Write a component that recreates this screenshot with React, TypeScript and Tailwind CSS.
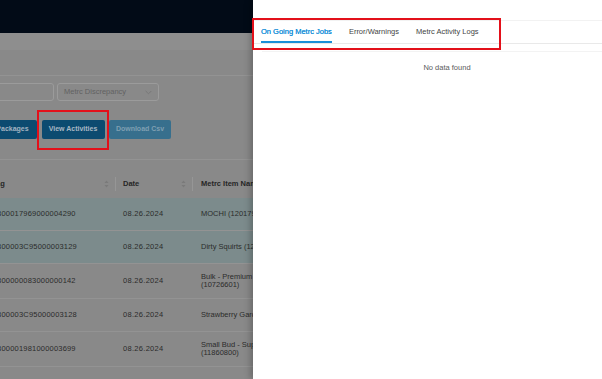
import React from "react";

function SortIcon() {
  return (
    <svg width="5" height="8" viewBox="0 0 5 8" className="shrink-0">
      <path d="M2.5 0.5 L4.5 3 L0.5 3 Z" fill="#7a7a7a" />
      <path d="M2.5 7.5 L4.5 5 L0.5 5 Z" fill="#7a7a7a" />
    </svg>
  );
}

type Row = { tag: string; date: string; name: string[]; hl: boolean };

const rows: Row[] = [
  { tag: "1A4010300017969000004290", date: "08.26.2024", name: ["MOCHI (12017905)"], hl: true },
  { tag: "1A4010300003C95000003129", date: "08.26.2024", name: ["Dirty Squirts (12017906)"], hl: true },
  { tag: "1A4010300000083000000142", date: "08.26.2024", name: ["Bulk - Premium Flower", "(10726601)"], hl: false },
  { tag: "1A4010300003C95000003128", date: "08.26.2024", name: ["Strawberry Gardens (12017907)"], hl: false },
  { tag: "1A4010300001981000003699", date: "08.26.2024", name: ["Small Bud - Super Lemon", "(11860800)"], hl: false },
  { tag: "1A4010300001981000003700", date: "08.26.2024", name: ["Popcorn (11860801)"], hl: false },
];

export default function App() {
  return (
    <div className="relative w-[602px] h-[379px] overflow-hidden bg-[#898989] font-['Liberation_Sans',Arial,sans-serif]">
      {/* Background page (dimmed) */}
      <div className="flex flex-col h-full">
        <div className="h-[33px] shrink-0 bg-[#020b17]" />
        <div className="h-[17px] shrink-0 bg-[#8e8e8e]" />
        <div className="h-[26px] shrink-0 border-b border-[#939393]" />

        {/* Filters */}
        <div className="flex gap-[3px] pt-[7px] -ml-[36px] shrink-0">
          <div className="w-[90px] h-[18px] rounded-[3px] border border-[#9b9b9b]" />
          <div className="w-[102px] h-[18px] rounded-[3px] border border-[#9b9b9b] flex items-center justify-between pl-[6px] pr-[6px]">
            <span className="text-[7.5px] text-[#626262] whitespace-nowrap">Metrc Discrepancy</span>
            <svg width="7" height="5" viewBox="0 0 7 5">
              <polyline points="0.7,1 3.5,3.8 6.3,1" fill="none" stroke="#767676" strokeWidth="0.9" />
            </svg>
          </div>
        </div>

        {/* Buttons */}
        <div className="flex gap-[4.5px] pt-[19px] -ml-[12px] shrink-0">
          <div className="h-[19px] w-[49px] rounded-[2px] bg-[#0c4b70] flex items-center justify-center text-[7px] font-bold text-[#a3b4c1] whitespace-nowrap">
            Packages
          </div>
          <div className="h-[19px] w-[63px] rounded-[2px] bg-[#0c4b70] flex items-center justify-center text-[7px] font-bold text-[#a9b8c4] whitespace-nowrap">
            View Activities
          </div>
          <div className="h-[19px] w-[62px] rounded-[2px] bg-[#376f8d] flex items-center justify-center text-[7px] font-bold text-[#7f9fb2] whitespace-nowrap">
            Download Csv
          </div>
        </div>

        {/* Table */}
        <div className="mt-[20px] border-t border-[#939393] -ml-[39px] shrink-0">
          <div className="flex h-[38px] items-end pb-[7px] text-[7.5px] font-bold text-[#262626]">
            <div className="w-[155px] flex items-center pl-[9px] h-[14px]">
              <span className="flex-1 whitespace-nowrap">Metrc Tag</span>
              <SortIcon />
              <span className="w-px h-[14px] bg-[#969696] ml-[6px]" />
            </div>
            <div className="w-[77px] flex items-center pl-[7px] h-[14px]">
              <span className="flex-1 whitespace-nowrap">Date</span>
              <SortIcon />
              <span className="w-px h-[14px] bg-[#969696] ml-[6px]" />
            </div>
            <div className="pl-[8px] whitespace-nowrap leading-[14px]">Metrc Item Name</div>
          </div>
          {rows.map((r, i) => (
            <div
              key={i}
              className={`flex items-center min-h-[33px] py-[9px] border-b border-[#939393] text-[7.5px] text-[#2b2b2b] ${
                r.hl ? "bg-[#7c8b8c]" : ""
              }`}
            >
              <div className="w-[155px] pl-[9px] whitespace-nowrap tracking-[0.2px]">{r.tag}</div>
              <div className="w-[77px] pl-[7px] whitespace-nowrap tracking-[0.3px]">{r.date}</div>
              <div className="pl-[8px] leading-[8px] flex flex-col">
                {r.name.map((n, j) => (
                  <span key={j} className="whitespace-nowrap">
                    {n}
                  </span>
                ))}
              </div>
            </div>
          ))}
        </div>
      </div>

      {/* Drawer */}
      <div className="absolute top-0 left-[253px] w-[349px] h-full bg-white overflow-hidden shadow-[-3px_0_6px_rgba(0,0,0,0.22)]">
        <div className="h-[20px]" />
        <div className="h-[24px] border-t border-b border-t-[#f2f2f2] border-b-[#e9e9e9] flex items-stretch gap-[17px] pl-[8px] text-[7.5px]">
          <div className="relative flex items-center text-[#1a8fd8] whitespace-nowrap [text-shadow:0_0_0.3px_#1a8fd8]">
            On Going Metrc Jobs
            <span className="absolute left-0 right-0 bottom-0 h-[2px] bg-[#1a8fd8]" />
          </div>
          <div className="flex items-center text-[#444444] whitespace-nowrap">Error/Warnings</div>
          <div className="flex items-center text-[#444444] whitespace-nowrap">Metrc Activity Logs</div>
        </div>
        <div className="ml-[9px] mt-[7px] border-t border-[#f3f3f3]">
          <div className="pl-[30px] pt-[11px] text-center text-[7.5px] leading-[10px] text-[#5a5a5a]">
            No data found
          </div>
        </div>
      </div>

      {/* Highlight boxes */}
      <div className="absolute left-[252px] top-[18px] w-[249px] h-[32px] border-2 border-[#e3101a]" />
      <div className="absolute left-[37px] top-[110px] w-[72px] h-[40px] border-2 border-[#e3101a]" />
    </div>
  );
}
